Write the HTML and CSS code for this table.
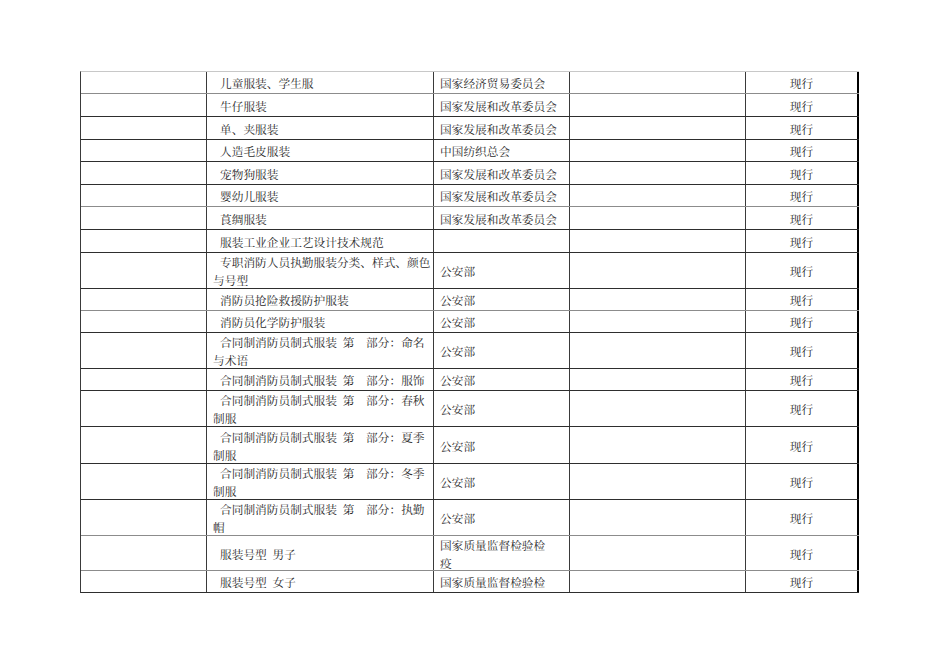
FILE: index.html
```html
<!DOCTYPE html>
<html lang="zh-CN">
<head>
<meta charset="utf-8">
<title>服装标准</title>
<link rel="stylesheet" href="styles.css">
</head>
<body>
<div class="sheet">
  <div class="row h22 line-gray">
    <div class="c c1"></div><div class="c c2"><p>儿童服装、学生服</p></div><div class="c c3"><p>国家经济贸易委员会</p></div><div class="c c4"></div><div class="c c5">现行</div>
  </div>
  <div class="row h23">
    <div class="c c1"></div><div class="c c2"><p>牛仔服装</p></div><div class="c c3"><p>国家发展和改革委员会</p></div><div class="c c4"></div><div class="c c5">现行</div>
  </div>
  <div class="row h23">
    <div class="c c1"></div><div class="c c2"><p>单、夹服装</p></div><div class="c c3"><p>国家发展和改革委员会</p></div><div class="c c4"></div><div class="c c5">现行</div>
  </div>
  <div class="row h22">
    <div class="c c1"></div><div class="c c2"><p>人造毛皮服装</p></div><div class="c c3"><p>中国纺织总会</p></div><div class="c c4"></div><div class="c c5">现行</div>
  </div>
  <div class="row h23">
    <div class="c c1"></div><div class="c c2"><p>宠物狗服装</p></div><div class="c c3"><p>国家发展和改革委员会</p></div><div class="c c4"></div><div class="c c5">现行</div>
  </div>
  <div class="row h22 line-gray">
    <div class="c c1"></div><div class="c c2"><p>婴幼儿服装</p></div><div class="c c3"><p>国家发展和改革委员会</p></div><div class="c c4"></div><div class="c c5">现行</div>
  </div>
  <div class="row h23">
    <div class="c c1"></div><div class="c c2"><p>莨绸服装</p></div><div class="c c3"><p>国家发展和改革委员会</p></div><div class="c c4"></div><div class="c c5">现行</div>
  </div>
  <div class="row h23">
    <div class="c c1"></div><div class="c c2"><p>服装工业企业工艺设计技术规范</p></div><div class="c c3"></div><div class="c c4"></div><div class="c c5">现行</div>
  </div>
  <div class="row h36">
    <div class="c c1"></div><div class="c c2"><p>专职消防人员执勤服装分类、样式、颜色<br>与号型</p></div><div class="c c3"><p>公安部</p></div><div class="c c4"></div><div class="c c5">现行</div>
  </div>
  <div class="row h22 line-gray">
    <div class="c c1"></div><div class="c c2"><p>消防员抢险救援防护服装</p></div><div class="c c3"><p>公安部</p></div><div class="c c4"></div><div class="c c5">现行</div>
  </div>
  <div class="row h22">
    <div class="c c1"></div><div class="c c2"><p>消防员化学防护服装</p></div><div class="c c3"><p>公安部</p></div><div class="c c4"></div><div class="c c5">现行</div>
  </div>
  <div class="row h36">
    <div class="c c1"></div><div class="c c2"><p>合同制消防员制式服装&#8194;第&#12288;部分：命名<br>与术语</p></div><div class="c c3"><p>公安部</p></div><div class="c c4"></div><div class="c c5">现行</div>
  </div>
  <div class="row h22">
    <div class="c c1"></div><div class="c c2"><p>合同制消防员制式服装&#8194;第&#12288;部分：服饰</p></div><div class="c c3"><p>公安部</p></div><div class="c c4"></div><div class="c c5">现行</div>
  </div>
  <div class="row h36">
    <div class="c c1"></div><div class="c c2"><p>合同制消防员制式服装&#8194;第&#12288;部分：春秋<br>制服</p></div><div class="c c3"><p>公安部</p></div><div class="c c4"></div><div class="c c5">现行</div>
  </div>
  <div class="row h37">
    <div class="c c1"></div><div class="c c2"><p>合同制消防员制式服装&#8194;第&#12288;部分：夏季<br>制服</p></div><div class="c c3"><p>公安部</p></div><div class="c c4"></div><div class="c c5">现行</div>
  </div>
  <div class="row h36">
    <div class="c c1"></div><div class="c c2"><p>合同制消防员制式服装&#8194;第&#12288;部分：冬季<br>制服</p></div><div class="c c3"><p>公安部</p></div><div class="c c4"></div><div class="c c5">现行</div>
  </div>
  <div class="row h36 line-gray">
    <div class="c c1"></div><div class="c c2"><p>合同制消防员制式服装&#8194;第&#12288;部分：执勤<br>帽</p></div><div class="c c3"><p>公安部</p></div><div class="c c4"></div><div class="c c5">现行</div>
  </div>
  <div class="row h35 line-gray">
    <div class="c c1"></div><div class="c c2"><p>服装号型&#8194;男子</p></div><div class="c c3"><p class="plain">国家质量监督检验检<br>疫</p></div><div class="c c4"></div><div class="c c5">现行</div>
  </div>
  <div class="row h22">
    <div class="c c1"></div><div class="c c2"><p>服装号型&#8194;女子</p></div><div class="c c3"><p>国家质量监督检验检</p></div><div class="c c4"></div><div class="c c5">现行</div>
  </div>
</div>
</body>
</html>
```

FILE: styles.css
```css
html, body {
  margin: 0;
  padding: 0;
  background: #ffffff;
}

body {
  font-family: "Noto Serif CJK SC", "Noto Sans CJK SC", "Liberation Serif", serif;
  font-size: 11.7px;
  color: #2a2a2a;
}

.sheet {
  margin: 71px 0 0 80px;
  width: 778px;
  border-top: 1px solid #c8c8c8;
  border-left: 1px solid #3a3a3a;
}

.row {
  display: flex;
  box-sizing: border-box;
  border-bottom: 1px solid #2e2e2e;
}

.row.line-gray {
  border-bottom-color: #8c8c8c;
}

.h22 { height: 22px; }
.h23 { height: 23px; }
.h35 { height: 35px; }
.h36 { height: 36px; }
.h37 { height: 37px; }

.c {
  box-sizing: border-box;
  border-right: 1px solid #3a3a3a;
  display: flex;
  align-items: center;
  line-height: 18px;
  padding-top: 1px;
}

.c p {
  margin: 0;
}

.c1 { width: 126px; }

.c2 {
  width: 227px;
  padding-left: 6px;
}

.c2 p {
  text-indent: 7px;
}

.c3 {
  width: 136px;
  padding-left: 6px;
}

.c4 { width: 176px; }

.c5 {
  width: 113px;
  justify-content: center;
  border-right: 2px solid #000000;
}
```
